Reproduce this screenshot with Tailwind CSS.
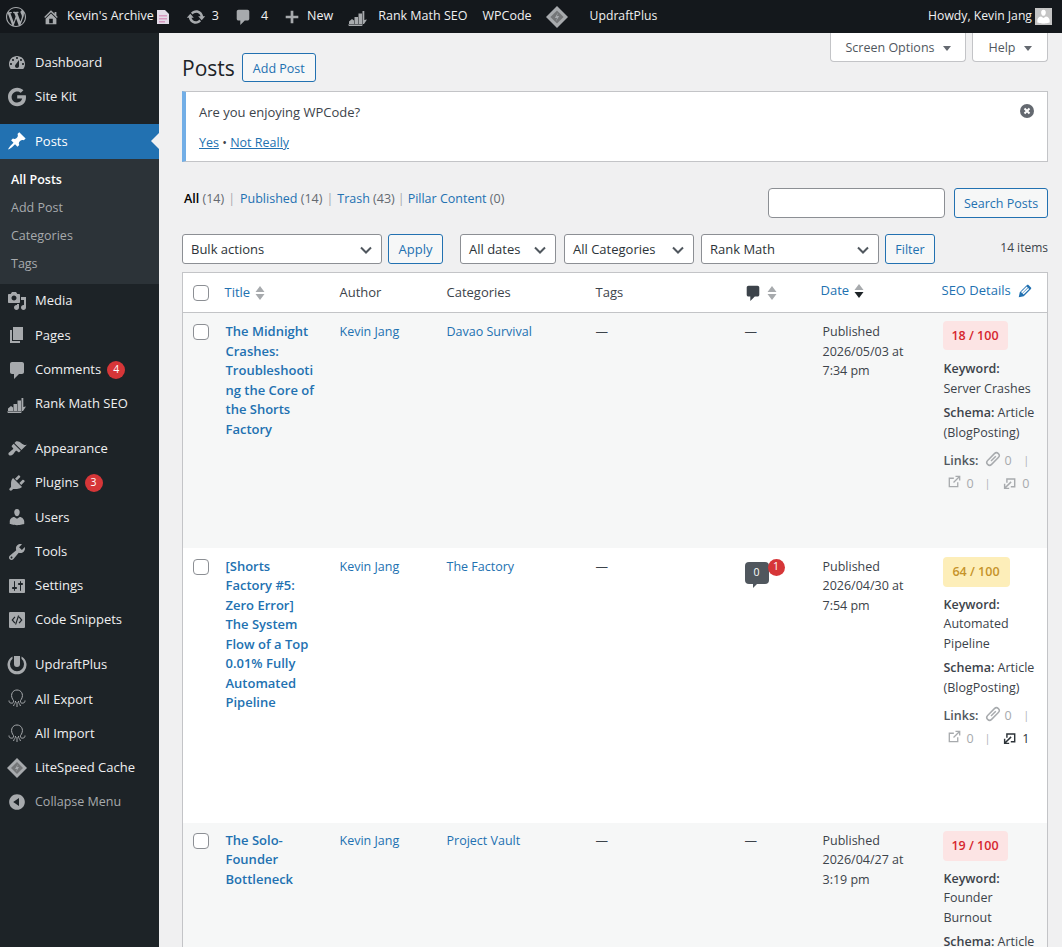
<!DOCTYPE html>
<html lang="en">
<head>
  <meta charset="UTF-8" />
  <title>Posts ‹ Kevin's Archive</title>
  <script src="https://cdn.jsdelivr.net/npm/@tailwindcss/browser@4"></script>
</head>
<body class="bg-[#f0f0f1] text-[#3c434a] font-['Open_Sans',sans-serif] text-[13px] h-[947px] overflow-hidden">
  <svg class="hidden">
    <symbol id="i-wp" viewBox="0 0 20 20"><path d="M20 10c0-5.51-4.49-10-10-10C4.48 0 0 4.49 0 10c0 5.52 4.48 10 10 10 5.51 0 10-4.48 10-10zM7.78 15.37L4.37 6.22c.55-.02 1.17-.08 1.17-.08.5-.06.44-1.13-.06-1.11 0 0-1.45.11-2.37.11-.18 0-.37 0-.58-.01C4.12 2.69 6.87 1.11 10 1.11c2.33 0 4.45.87 6.05 2.34-.68-.11-1.65.39-1.65 1.58 0 .74.45 1.36.9 2.1.35.61.55 1.36.55 2.46 0 1.49-1.4 5-1.4 5l-3.03-8.37c.54-.02.82-.17.82-.17.5-.05.44-1.25-.06-1.22 0 0-1.44.12-2.38.12-.87 0-2.33-.12-2.33-.12-.5-.03-.56 1.2-.06 1.22l.92.08 1.26 3.41zM17.41 10c.24-.64.74-1.87.43-4.25.7 1.29 1.05 2.71 1.05 4.25 0 3.29-1.73 6.24-4.4 7.78.97-2.59 1.94-5.2 2.92-7.78zM6.1 18.09C3.12 16.65 1.11 13.53 1.11 10c0-1.3.23-2.48.72-3.59C3.25 10.3 4.67 14.2 6.1 18.09zm4.03-6.63l2.58 6.98c-.86.29-1.76.45-2.71.45-.79 0-1.57-.11-2.29-.33.81-2.38 1.62-4.74 2.42-7.1z"/></symbol>
    <symbol id="i-home" viewBox="0 0 20 20"><path d="M16 8.5l1.53 1.53-1.06 1.06L10 4.62l-6.47 6.47-1.06-1.06L10 2.5l4 4v-2h2v4zm-6-2.46l6 5.99V18H4v-5.97zM12 17v-5H8v5h4z"/></symbol>
    <symbol id="i-updates" viewBox="0 0 20 20"><path d="M10.2 3.28c3.53 0 6.43 2.61 6.92 6h2.08l-3.5 4-3.5-4h2.32c-.45-1.97-2.21-3.45-4.32-3.45-1.45 0-2.73.71-3.54 1.78L4.95 5.66C6.23 4.2 8.11 3.28 10.2 3.28zm-.4 13.44c-3.52 0-6.43-2.61-6.92-6H.8l3.5-4c1.17 1.33 2.33 2.67 3.5 4H5.48c.45 1.97 2.21 3.45 4.32 3.45 1.45 0 2.73-.71 3.54-1.78l1.71 1.95c-1.28 1.46-3.15 2.38-5.25 2.38z"/></symbol>
    <symbol id="i-comment" viewBox="0 0 20 20"><path d="M5 2h10c1.1 0 2 .9 2 2v8c0 1.1-.9 2-2 2h-3l-5 5v-5H5c-1.1 0-2-.9-2-2V4c0-1.1.9-2 2-2z"/></symbol>
    <symbol id="i-plus" viewBox="0 0 20 20"><path d="M17 8.5v3h-5.5V17h-3v-5.500H3v-3h5.500V3h3v5.500z"/></symbol>
    <symbol id="i-rank" viewBox="0 0 20 20"><path d="M1 14.500l3-2.500 2 1.500v3.500H1zM6.500 10H10v7H6.500zM10.500 6.500H14V17h-3.500zM14.500 4h1.800v9l2.700-.5L16 17h-1.500zM0 17.500h15l-1 1.500H1z"/></symbol>
    <symbol id="i-lite" viewBox="0 0 20 20"><path d="M10 0l10 10-10 10L0 10z"/><path d="M10 4l6 6-6 6-6-6z" fill="#000" fill-opacity=".3"/><path d="M11 6l-3 5h2l-1 3 3-5h-2z"/></symbol>
    <symbol id="i-dash" viewBox="0 0 20 20"><path d="M3.760 16h12.480c1.100-1.370 1.760-3.110 1.760-5 0-4.420-3.580-8-8-8s-8 3.580-8 8c0 1.890.66 3.630 1.760 5zM10 4c.55 0 1 .45 1 1s-.45 1-1 1-1-.45-1-1 .45-1 1-1zM6 6c.55 0 1 .45 1 1s-.45 1-1 1-1-.45-1-1 .45-1 1-1zm8 0c.55 0 1 .45 1 1s-.45 1-1 1-1-.45-1-1 .45-1 1-1zm-5.370 5.550L12 7v6c0 1.100-.9 2-2 2s-2-.9-2-2c0-.57.24-1.080.63-1.450zM4 10c.55 0 1 .45 1 1s-.45 1-1 1-1-.45-1-1 .45-1 1-1zm12 0c.55 0 1 .45 1 1s-.45 1-1 1-1-.45-1-1 .45-1 1-1z"/></symbol>
    <symbol id="i-google" viewBox="0 0 20 20"><path d="M10.200 8.300v3.300h5c-.3 1.700-2 4-5 4-3.100 0-5.600-2.500-5.600-5.600s2.500-5.600 5.600-5.600c1.700 0 2.900.7 3.600 1.400l2.600-2.500C14.700 1.700 12.700.8 10.200.8 5.100.8 1 4.900 1 10s4.100 9.200 9.200 9.200c5.300 0 8.800-3.700 8.800-9 0-.7-.1-1.300-.2-1.900z"/></symbol>
    <symbol id="i-pin" viewBox="0 0 20 20"><path d="M10.440 3.020l1.820-1.820 6.360 6.350-1.830 1.820c-1.050-.68-2.480-.57-3.410.36l-.75.75c-.92.93-1.040 2.350-.35 3.410l-1.830 1.820-2.410-2.410-2.800 2.790c-.42.42-3.380 2.710-3.800 2.290s1.860-3.390 2.280-3.810l2.790-2.790L4.100 9.360l1.830-1.820c1.050.69 2.480.57 3.400-.36l.75-.75c.93-.92 1.050-2.350.36-3.410z"/></symbol>
    <symbol id="i-media" viewBox="0 0 20 20"><path d="M13 11V4c0-.55-.45-1-1-1h-1.670L9 1H5L3.670 3H2c-.55 0-1 .45-1 1v7c0 .55.45 1 1 1h10c.55 0 1-.45 1-1zM7 4.500c1.380 0 2.500 1.120 2.500 2.500S8.380 9.500 7 9.500 4.500 8.380 4.500 7 5.620 4.500 7 4.500zM14 6h5v10.500c0 1.380-1.120 2.500-2.500 2.500S14 17.880 14 16.500s1.120-2.500 2.500-2.500c.17 0 .34.02.5.05V9h-3V6zm-4 8.050V13h2v3.500c0 1.380-1.120 2.500-2.500 2.500S7 17.880 7 16.500 8.120 14 9.500 14c.17 0 .34.02.5.05z"/></symbol>
    <symbol id="i-pages" viewBox="0 0 20 20"><path d="M6 15V2h10v13H6zm-1 1h8v2H3V5h2v11z"/></symbol>
    <symbol id="i-brush" viewBox="0 0 20 20"><path d="M14.480 11.060L7.410 3.990l1.500-1.500c.5-.56 2.300-.47 3.510.32 1.210.8 1.430 1.280 2.910 2.100 1.180.64 2.450 1.260 4.450.85zm-.71.71L6.700 4.700 4.930 6.470c-.39.39-.39 1.020 0 1.410l1.060 1.060c.39.39.39 1.030 0 1.420-.6.6-1.430 1.110-2.210 1.690-.35.26-.7.53-1.010.84C1.430 13.230.91 15.080 1.910 16.070c1 1 2.850.48 4.190-.86.31-.31.58-.66.84-1.010.58-.78 1.090-1.610 1.690-2.210.39-.39 1.020-.39 1.410 0l1.060 1.060c.39.39 1.020.39 1.410 0z"/></symbol>
    <symbol id="i-plugin" viewBox="0 0 20 20"><path d="M13.110 4.360L9.870 7.600 8 5.730l3.240-3.240c.35-.34 1.050-.2 1.560.32.52.51.66 1.210.31 1.550zm-8 1.770l.91-1.120 9.010 9.010-1.190.84c-.71.71-2.630 1.160-3.820 1.160H6.140L4.900 17.260c-.59.59-1.540.59-2.120 0-.59-.58-.59-1.530 0-2.120l1.240-1.240v-3.880c0-1.130.4-3.190 1.090-3.890zm7.260 3.970l3.240-3.240c.34-.35 1.040-.21 1.550.31.52.51.66 1.210.31 1.550l-3.240 3.250z"/></symbol>
    <symbol id="i-user" viewBox="0 0 20 20"><path d="M10 9.250c-2.270 0-2.730-3.440-2.730-3.440C7 4.020 7.820 2 9.970 2c2.160 0 2.980 2.020 2.710 3.810 0 0-.41 3.440-2.68 3.440zm0 2.570L12.720 10c2.390 0 4.520 2.330 4.520 4.530v2.490s-3.650 1.130-7.240 1.130c-3.650 0-7.240-1.130-7.240-1.130v-2.490c0-2.250 1.940-4.480 4.470-4.480z"/></symbol>
    <symbol id="i-tools" viewBox="0 0 20 20"><path d="M16.680 9.770c-1.340 1.340-3.300 1.670-4.950.99l-5.410 6.520c-.99.99-2.590.99-3.580 0s-.99-2.590 0-3.570l6.520-5.420c-.68-1.650-.35-3.610.99-4.950 1.280-1.280 3.120-1.620 4.720-1.060l-2.890 2.890 2.820 2.820 2.860-2.870c.53 1.580.18 3.390-1.080 4.650zM3.810 16.210c.4.39 1.040.39 1.430 0 .4-.4.4-1.040 0-1.430-.39-.4-1.030-.4-1.430 0-.39.39-.39 1.030 0 1.430z"/></symbol>
    <symbol id="i-settings" viewBox="0 0 20 20"><path d="M18 16V4c0-.55-.45-1-1-1H3c-.55 0-1 .45-1 1v12c0 .55.45 1 1 1h14c.55 0 1-.45 1-1zM8 11h1c.55 0 1 .45 1 1s-.45 1-1 1H8v1.500c0 .28-.22.5-.5.5s-.5-.22-.5-.5V13H6c-.55 0-1-.45-1-1s.45-1 1-1h1V5.500c0-.28.22-.5.5-.5s.5.22.5.5V11zm5-2h-1c-.55 0-1-.45-1-1s.45-1 1-1h1V5.500c0-.28.22-.5.5-.5s.5.22.5.5V7h1c.55 0 1 .45 1 1s-.45 1-1 1h-1v5.500c0 .28-.22.5-.5.5s-.5-.22-.5-.5V9z"/></symbol>
    <symbol id="i-code" viewBox="0 0 20 20"><path fill-rule="evenodd" d="M3 2h14a1 1 0 0 1 1 1v14a1 1 0 0 1-1 1H3a1 1 0 0 1-1-1V3a1 1 0 0 1 1-1zM7.500 6.500L4.500 10l3 3.500.9-.8L6.100 10l2.300-2.700zM11 5.500L8 14.500h1.200l3-9zM12.500 6.500l-.9.8 2.300 2.700-2.300 2.700.9.8 3-3.500z"/></symbol>
    <symbol id="i-updraft" viewBox="0 0 20 20"><path fill-rule="evenodd" d="M5.500 1.500A9.500 9.500 0 1 0 14.500 1.500L14.500 3.800A7 7 0 1 1 5.500 3.800zM7 1v8a3 3 0 0 0 6 0V1z"/></symbol>
    <symbol id="i-octo" viewBox="0 0 20 20"><path fill="none" stroke="currentColor" stroke-width="1" d="M5.500 10C3 5 6 1 10 1s7 4 4.500 9c-.6 1.200-1.500 1.500-1 3 .3 1 1.500 1.500 2.500 1M5.500 10c.6 1.200 1.500 1.500 1 3-.3 1-1.500 1.500-2.500 1M8.500 12c.3 2-1.500 3-2 5M11.500 12c-.3 2 1.500 3 2 5M2 11.500c0 2 1 2.500 2 2.500M18 11.500c0 2-1 2.500-2 2.500M10 13v5"/></symbol>
    <symbol id="i-collapse" viewBox="0 0 20 20"><path d="M10 2.160c4.330 0 7.840 3.510 7.840 7.840s-3.510 7.840-7.840 7.840S2.160 14.330 2.160 10 5.710 2.160 10 2.160zm2 11.720V6.120L6.180 9.880z"/></symbol>
    <symbol id="i-link" viewBox="0 0 20 20"><g fill="none" stroke="currentColor" stroke-width="1.800"><rect x="0.500" y="6.500" width="19" height="7" rx="3.500" transform="rotate(-45 10 10)"/><path d="M7.500 12.500l6-6"/></g></symbol>
    <symbol id="i-ext" viewBox="0 0 20 20"><path fill="none" stroke="currentColor" stroke-width="2" d="M15 11v7H2V5h7M8.500 11.500L17 3M11.500 2H18v6.500"/></symbol>
    <symbol id="i-int" viewBox="0 0 20 20"><path fill="none" stroke="currentColor" stroke-width="2.200" d="M6 9V3h12v12h-6M12.500 7.500L3 17M2.500 10.500V17.500H9.500"/></symbol>
    <symbol id="i-pencil" viewBox="0 0 20 20"><path d="M13.890 3.390l2.710 2.720c.46.46.42 1.240.03 1.640l-8.030 8.030-5.560 1.160 1.160-5.580s7.600-7.630 7.990-8.030c.39-.39 1.220-.39 1.700.06zm-2.040 1.590l-6.200 6.200 1.200 1.200 6.200-6.200zm1.600 1.600l-6.200 6.200 1.200 1.200 6.200-6.200z"/></symbol>
    <symbol id="i-chev" viewBox="0 0 16 16"><path fill="none" stroke="currentColor" stroke-width="2" d="M3 5.500l5 5 5-5"/></symbol>
    <symbol id="i-sort" viewBox="0 0 10 16"><path d="M5 1l4.500 6h-9zM5 15L.5 9h9z"/></symbol>
  </svg>

  <!-- admin bar -->
  <header class="h-[33px] bg-[#14181c] text-[#f0f0f1] text-[12.500px] flex items-center pl-[6px] pr-[10px]">
    <svg class="w-[20px] h-[20px] fill-[#a7aaad]"><use href="#i-wp"/></svg>
    <svg class="w-[18px] h-[18px] ml-[16px] fill-[#a7aaad]"><use href="#i-home"/></svg>
    <span class="ml-[7px]">Kevin's Archive</span>
    <svg viewBox="0 0 13 14" class="ml-[2px] w-[13px] h-[14px]"><path d="M1 0h8l4 4v10H1z" fill="#e4dce8"/><path d="M3 5h8v1.500H3zM3 8h8v1.500H3zM3 11h6v1.500H3z" fill="#d79abf"/></svg>
    <svg class="w-[20px] h-[20px] ml-[17px] fill-[#a7aaad]"><use href="#i-updates"/></svg>
    <span class="ml-[6px]">3</span>
    <svg class="w-[18px] h-[18px] ml-[15px] fill-[#a7aaad]"><use href="#i-comment"/></svg>
    <span class="ml-[9px]">4</span>
    <svg class="w-[18px] h-[18px] ml-[15px] fill-[#a7aaad]"><use href="#i-plus"/></svg>
    <span class="ml-[6px]">New</span>
    <svg class="w-[20px] h-[20px] ml-[15px] fill-[#a7aaad]"><use href="#i-rank"/></svg>
    <span class="ml-[10px]">Rank Math SEO</span>
    <span class="ml-[15px]">WPCode</span>
    <svg class="w-[22px] h-[22px] ml-[14px] fill-[#a7aaad]"><use href="#i-lite"/></svg>
    <span class="ml-[22px] text-[12.200px]">UpdraftPlus</span>
    <span class="ml-auto text-[12.200px]">Howdy, Kevin Jang</span>
    <span class="ml-[3px] w-[17px] h-[17px] bg-[#c4c4c4] flex items-end justify-center overflow-hidden">
      <svg class="w-[17px] h-[17px] fill-white"><use href="#i-user"/></svg>
    </span>
  </header>

  <div class="flex h-[914px]">
    <!-- sidebar -->
    <nav class="w-[159px] shrink-0 bg-[#1d2327] text-[#f0f0f1] pt-[12.400px]">
      <a class="h-[34.300px] flex items-center"><svg class="w-[20px] h-[20px] ml-[7px] mr-[8px] fill-[#a7aaad]"><use href="#i-dash"/></svg>Dashboard</a>
      <a class="h-[34.300px] flex items-center"><svg class="w-[20px] h-[20px] ml-[7px] mr-[8px] fill-[#a7aaad]"><use href="#i-google"/></svg>Site Kit</a>
      <div class="h-[10px]"></div>
      <a class="relative h-[35px] flex items-center bg-[#2271b1] text-white"><svg class="w-[20px] h-[20px] ml-[7px] mr-[8px] fill-white"><use href="#i-pin"/></svg>Posts
        <span class="absolute right-0 top-[9px] border-y-[8px] border-r-[8px] border-y-transparent border-r-[#f0f0f1]"></span>
      </a>
      <ul class="bg-[#2c3338] text-[#a7aaad] text-[12.500px] pt-[7px] pb-[6px]">
        <li class="h-[28px] pl-[11px] flex items-center font-semibold text-white">All Posts</li>
        <li class="h-[28px] pl-[11px] flex items-center">Add Post</li>
        <li class="h-[28px] pl-[11px] flex items-center">Categories</li>
        <li class="h-[28px] pl-[11px] flex items-center">Tags</li>
      </ul>
      <a class="h-[34.300px] flex items-center"><svg class="w-[20px] h-[20px] ml-[7px] mr-[8px] fill-[#a7aaad]"><use href="#i-media"/></svg>Media</a>
      <a class="h-[34.300px] flex items-center"><svg class="w-[20px] h-[20px] ml-[7px] mr-[8px] fill-[#a7aaad]"><use href="#i-pages"/></svg>Pages</a>
      <a class="h-[34.300px] flex items-center"><svg class="w-[20px] h-[20px] ml-[7px] mr-[8px] fill-[#a7aaad]"><use href="#i-comment"/></svg>Comments
        <span class="ml-[6px] w-[18px] h-[18px] rounded-full bg-[#d63638] text-white text-[10.500px] flex items-center justify-center">4</span></a>
      <a class="h-[34.300px] flex items-center"><svg class="w-[20px] h-[20px] ml-[7px] mr-[8px] fill-[#a7aaad]"><use href="#i-rank"/></svg>Rank Math SEO</a>
      <div class="h-[10.400px]"></div>
      <a class="h-[34.300px] flex items-center"><svg class="w-[20px] h-[20px] ml-[7px] mr-[8px] fill-[#a7aaad]"><use href="#i-brush"/></svg>Appearance</a>
      <a class="h-[34.300px] flex items-center"><svg class="w-[20px] h-[20px] ml-[7px] mr-[8px] fill-[#a7aaad]"><use href="#i-plugin"/></svg>Plugins
        <span class="ml-[6px] w-[18px] h-[18px] rounded-full bg-[#d63638] text-white text-[10.500px] flex items-center justify-center">3</span></a>
      <a class="h-[34.300px] flex items-center"><svg class="w-[20px] h-[20px] ml-[7px] mr-[8px] fill-[#a7aaad]"><use href="#i-user"/></svg>Users</a>
      <a class="h-[34.300px] flex items-center"><svg class="w-[20px] h-[20px] ml-[7px] mr-[8px] fill-[#a7aaad]"><use href="#i-tools"/></svg>Tools</a>
      <a class="h-[34.300px] flex items-center"><svg class="w-[20px] h-[20px] ml-[7px] mr-[8px] fill-[#a7aaad]"><use href="#i-settings"/></svg>Settings</a>
      <a class="h-[34.300px] flex items-center"><svg class="w-[20px] h-[20px] ml-[7px] mr-[8px] fill-[#a7aaad]"><use href="#i-code"/></svg>Code Snippets</a>
      <div class="h-[10.600px]"></div>
      <a class="h-[34.300px] flex items-center"><svg class="w-[20px] h-[20px] ml-[7px] mr-[8px] fill-[#a7aaad]"><use href="#i-updraft"/></svg>UpdraftPlus</a>
      <a class="h-[34.300px] flex items-center"><svg class="w-[20px] h-[20px] ml-[7px] mr-[8px] text-[#a7aaad]"><use href="#i-octo"/></svg>All Export</a>
      <a class="h-[34.300px] flex items-center"><svg class="w-[20px] h-[20px] ml-[7px] mr-[8px] text-[#a7aaad]"><use href="#i-octo"/></svg>All Import</a>
      <a class="h-[34.300px] flex items-center"><svg class="w-[20px] h-[20px] ml-[7px] mr-[8px] fill-[#a7aaad]"><use href="#i-lite"/></svg>LiteSpeed Cache</a>
      <a class="h-[34.300px] flex items-center text-[#a7aaad] text-[12.500px]"><svg class="w-[20px] h-[20px] ml-[7px] mr-[8px] fill-[#a7aaad]"><use href="#i-collapse"/></svg>Collapse Menu</a>
    </nav>

    <!-- content -->
    <main class="flex-1 min-w-0 pl-[23px] pr-[14px]">
      <div class="flex justify-end gap-[6px] h-[29px] text-[#50575e] text-[12.500px]">
        <div class="w-[136px] pt-[2px] flex items-center justify-center gap-[8px] bg-white border border-t-0 border-[#c3c4c7] rounded-b-[4px]">Screen Options <span class="border-x-[4px] border-t-[5px] border-x-transparent border-t-[#646970]"></span></div>
        <div class="w-[76px] pt-[2px] flex items-center justify-center gap-[8px] bg-white border border-t-0 border-[#c3c4c7] rounded-b-[4px]">Help <span class="border-x-[4px] border-t-[5px] border-x-transparent border-t-[#646970]"></span></div>
      </div>

      <div class="-mt-[9px] flex items-center h-[29px] gap-[7px]">
        <h1 class="text-[21px] text-[#1d2327] pt-[2px]">Posts</h1>
        <a class="h-[29px] w-[74px] pt-[3px] flex items-center justify-center rounded-[3px] border border-[#2271b1] bg-[#f6f7f7] text-[#2271b1] text-[12.500px]">Add Post</a>
      </div>

      <div class="mt-[9px] h-[71px] relative bg-white border border-[#c3c4c7] border-l-[4px] border-l-[#72aee6] pl-[13px] pt-[11px]">
        <p class="leading-[18px]">Are you enjoying WPCode?</p>
        <p class="mt-[13px] leading-[18px] text-[12.500px]"><a class="underline text-[#2271b1]">Yes</a> • <a class="underline text-[#2271b1]">Not Really</a></p>
        <span class="absolute right-[13px] top-[12px] w-[14px] h-[14px] rounded-full bg-[#646970] text-white flex items-center justify-center">
          <svg viewBox="0 0 14 14" class="w-[14px] h-[14px]"><path d="M4.500 4.500l5 5M9.500 4.500l-5 5" stroke="currentColor" stroke-width="2"/></svg>
        </span>
      </div>

      <div class="mt-[26px] flex items-start h-[46px]">
        <ul class="flex text-[12.500px] text-[#646970] pt-[2px] pl-[2px]">
          <li><b class="font-semibold text-black">All</b> (14)<span class="mx-[4px] text-[#a7aaad]">|</span></li>
          <li class="pl-[1px]"><a class="text-[#2271b1]">Published</a> (14)<span class="mx-[4px] text-[#a7aaad]">|</span></li>
          <li><a class="text-[#2271b1]">Trash</a> (43)<span class="mx-[3px] text-[#a7aaad]">|</span></li>
          <li><a class="text-[#2271b1]">Pillar Content</a> (0)</li>
        </ul>
        <div class="ml-auto flex gap-[9px]">
          <input class="w-[177px] h-[30px] bg-white border border-[#8c8f94] rounded-[4px]" />
          <button class="w-[94px] h-[30px] pt-[2px] border border-[#2271b1] rounded-[3px] bg-[#f6f7f7] text-[#2271b1] text-[12.500px]">Search Posts</button>
        </div>
      </div>

      <div class="flex items-center h-[30px] text-[#2c3338]">
        <div class="w-[200px] h-[30px] pt-[2px] flex items-center justify-between pl-[8px] pr-[7px] bg-white border border-[#8c8f94] rounded-[3px]">Bulk actions <svg class="w-[16px] h-[16px] text-[#50575e]"><use href="#i-chev"/></svg></div>
        <button class="ml-[6px] w-[55px] h-[30px] pt-[2px] border border-[#2271b1] rounded-[3px] bg-[#f6f7f7] text-[#2271b1]">Apply</button>
        <div class="ml-[17px] w-[96px] h-[30px] pt-[2px] flex items-center justify-between pl-[8px] pr-[7px] bg-white border border-[#8c8f94] rounded-[3px]">All dates <svg class="w-[16px] h-[16px] text-[#50575e]"><use href="#i-chev"/></svg></div>
        <div class="ml-[8px] w-[130px] h-[30px] pt-[2px] flex items-center justify-between pl-[8px] pr-[7px] bg-white border border-[#8c8f94] rounded-[3px]">All Categories <svg class="w-[16px] h-[16px] text-[#50575e]"><use href="#i-chev"/></svg></div>
        <div class="ml-[7px] w-[178px] h-[30px] pt-[2px] flex items-center justify-between pl-[8px] pr-[7px] bg-white border border-[#8c8f94] rounded-[3px]">Rank Math <svg class="w-[16px] h-[16px] text-[#50575e]"><use href="#i-chev"/></svg></div>
        <button class="ml-[6px] w-[50px] h-[30px] pt-[2px] border border-[#2271b1] rounded-[3px] bg-[#f6f7f7] text-[#2271b1] text-[12.500px]">Filter</button>
        <span class="ml-auto text-[12px] text-[#3c434a] -mt-[2px]">14 items</span>
      </div>

      <table class="mt-[8px] w-full table-fixed border border-[#c3c4c7] bg-white leading-[19.500px] text-[12.500px]">
        <colgroup>
          <col class="w-[40px]" /><col class="w-[117px]" /><col class="w-[107px]" /><col class="w-[149px]" /><col class="w-[149px]" /><col class="w-[76px]" /><col class="w-[121px]" /><col />
        </colgroup>
        <thead>
          <tr class="h-[40px] border-b border-[#c3c4c7] text-left text-[13px] font-normal">
            <th class="pl-[10px]"><span class="block w-[16px] h-[16px] border border-[#8c8f94] rounded-[4px] bg-white"></span></th>
            <th class="font-normal pl-[2px]"><a class="flex items-center gap-[5px] text-[#2271b1]">Title <svg class="w-[10px] h-[16px] fill-[#a7aaad]"><use href="#i-sort"/></svg></a></th>
            <th class="font-normal">Author</th>
            <th class="font-normal">Categories</th>
            <th class="font-normal">Tags</th>
            <th class="font-normal"><span class="flex items-center gap-[5px]"><svg class="w-[18px] h-[18px] -ml-[1px] fill-[#3c434a]"><use href="#i-comment"/></svg><svg class="w-[10px] h-[16px] fill-[#a7aaad]"><use href="#i-sort"/></svg></span></th>
            <th class="font-normal"><a class="flex items-center gap-[5px] -mt-[3px] text-[#2271b1]">Date <svg viewBox="0 0 10 16" class="w-[10px] h-[16px]"><path d="M5 1l4.500 6h-9z" fill="#a7aaad"/><path d="M5 15L.5 9h9z" fill="#1d2327"/></svg></a></th>
            <th class="font-normal"><a class="flex items-center gap-[5px] -mt-[3px] text-[#2271b1]">SEO Details <svg class="w-[18px] h-[18px] fill-[#2271b1]"><use href="#i-pencil"/></svg></a></th>
          </tr>
        </thead>
        <tbody>
          <tr class="h-[235px] align-top bg-[#f6f7f7]">
            <td class="pl-[10px] pt-[11px]"><span class="block w-[16px] h-[16px] border border-[#8c8f94] rounded-[4px] bg-white"></span></td>
            <td class="pl-[3px] pt-[9px] font-semibold text-[13px] text-[#2271b1]"><a class="block w-[92px] break-words">The Midnight Crashes: Troubleshooting the Core of the Shorts Factory</a></td>
            <td class="pt-[9px] text-[#2271b1]">Kevin Jang</td>
            <td class="pt-[9px] text-[#2271b1]">Davao Survival</td>
            <td class="pt-[9px]">—</td>
            <td class="pt-[9px]">—</td>
            <td class="pt-[9px] pl-[2px]">Published<br />2026/05/03 at<br />7:34 pm</td>
            <td class="pt-[8px] pl-[1px]">
              <span class="flex items-center justify-center w-[65px] h-[29px] rounded-[4px] bg-[#fce4e4] text-[#d6262e] font-semibold">18 / 100</span>
              <div class="mt-[9px] pl-[1px]"><b class="font-semibold">Keyword:</b><br />Server Crashes</div>
              <div class="mt-[5px] pl-[1px]"><b class="font-semibold">Schema:</b> Article<br />(BlogPosting)</div>
              <div class="mt-[9px] pl-[1px] flex items-center text-[#a7aaad]"><b class="font-semibold text-[#50575e] mr-[7px]">Links:</b><svg class="w-[16px] h-[16px] mr-[3px] -mt-[4px]"><use href="#i-link"/></svg>0<span class="ml-[12px] text-[10px]">|</span></div>
              <div class="mt-[3px] flex items-center text-[#a7aaad]"><svg class="w-[13px] h-[13px] ml-[5px] mr-[6px] -mt-[4px]"><use href="#i-ext"/></svg>0<span class="ml-[11px] text-[10px]">|</span><svg class="w-[13px] h-[13px] ml-[13px] mr-[6px]"><use href="#i-int"/></svg>0</div>
            </td>
          </tr>
          <tr class="h-[275px] align-top bg-white">
            <td class="pl-[10px] pt-[11px]"><span class="block w-[16px] h-[16px] border border-[#8c8f94] rounded-[4px] bg-white"></span></td>
            <td class="pl-[3px] pt-[9px] font-semibold text-[13px] text-[#2271b1]"><a class="block w-[92px] break-words">[Shorts Factory #5: Zero Error] The System Flow of a Top 0.01% Fully Automated Pipeline</a></td>
            <td class="pt-[9px] text-[#2271b1]">Kevin Jang</td>
            <td class="pt-[9px] text-[#2271b1]">The Factory</td>
            <td class="pt-[9px]">—</td>
            <td class="pt-[14px]">
              <span class="relative flex items-center justify-center w-[24px] h-[22px] rounded-[4px] bg-[#50575e] text-white text-[10.500px]">0
                <span class="absolute -right-[16px] -top-[3px] w-[17px] h-[17px] rounded-full bg-[#d63638] flex items-center justify-center">1</span>
                <span class="absolute left-[8px] -bottom-[4px] border-r-[5px] border-t-[5px] border-r-transparent border-t-[#50575e]"></span>
              </span>
            </td>
            <td class="pt-[9px] pl-[2px]">Published<br />2026/04/30 at<br />7:54 pm</td>
            <td class="pt-[9px] pl-[1px]">
              <span class="flex items-center justify-center w-[67px] h-[30px] rounded-[4px] bg-[#fdeeb9] text-[#c6932a] font-semibold">64 / 100</span>
              <div class="mt-[8px] pl-[1px]"><b class="font-semibold">Keyword:</b><br />Automated<br />Pipeline</div>
              <div class="mt-[5px] pl-[1px]"><b class="font-semibold">Schema:</b> Article<br />(BlogPosting)</div>
              <div class="mt-[9px] pl-[1px] flex items-center text-[#a7aaad]"><b class="font-semibold text-[#50575e] mr-[7px]">Links:</b><svg class="w-[16px] h-[16px] mr-[3px] -mt-[4px]"><use href="#i-link"/></svg>0<span class="ml-[12px] text-[10px]">|</span></div>
              <div class="mt-[3px] flex items-center text-[#a7aaad]"><svg class="w-[13px] h-[13px] ml-[5px] mr-[6px] -mt-[4px]"><use href="#i-ext"/></svg>0<span class="ml-[11px] text-[10px]">|</span><svg class="w-[13px] h-[13px] ml-[13px] mr-[6px] text-[#2c3338]"><use href="#i-int"/></svg><span class="text-[#2c3338]">1</span></div>
            </td>
          </tr>
          <tr class="align-top bg-[#f6f7f7]">
            <td class="pl-[10px] pt-[10px]"><span class="block w-[16px] h-[16px] border border-[#8c8f94] rounded-[4px] bg-white"></span></td>
            <td class="pl-[3px] pt-[8px] font-semibold text-[13px] text-[#2271b1]"><a class="block w-[92px] break-words">The Solo-Founder Bottleneck</a></td>
            <td class="pt-[8px] text-[#2271b1]">Kevin Jang</td>
            <td class="pt-[8px] text-[#2271b1]">Project Vault</td>
            <td class="pt-[8px]">—</td>
            <td class="pt-[8px]">—</td>
            <td class="pt-[8px] pl-[2px]">Published<br />2026/04/27 at<br />3:19 pm</td>
            <td class="pt-[8px] pl-[1px]">
              <span class="flex items-center justify-center w-[65px] h-[30px] rounded-[4px] bg-[#fce4e4] text-[#d6262e] font-semibold">19 / 100</span>
              <div class="mt-[8px] pl-[1px]"><b class="font-semibold">Keyword:</b><br />Founder<br />Burnout</div>
              <div class="mt-[5px] pl-[1px]"><b class="font-semibold">Schema:</b> Article</div>
            </td>
          </tr>
        </tbody>
      </table>
    </main>
  </div>
</body>
</html>
